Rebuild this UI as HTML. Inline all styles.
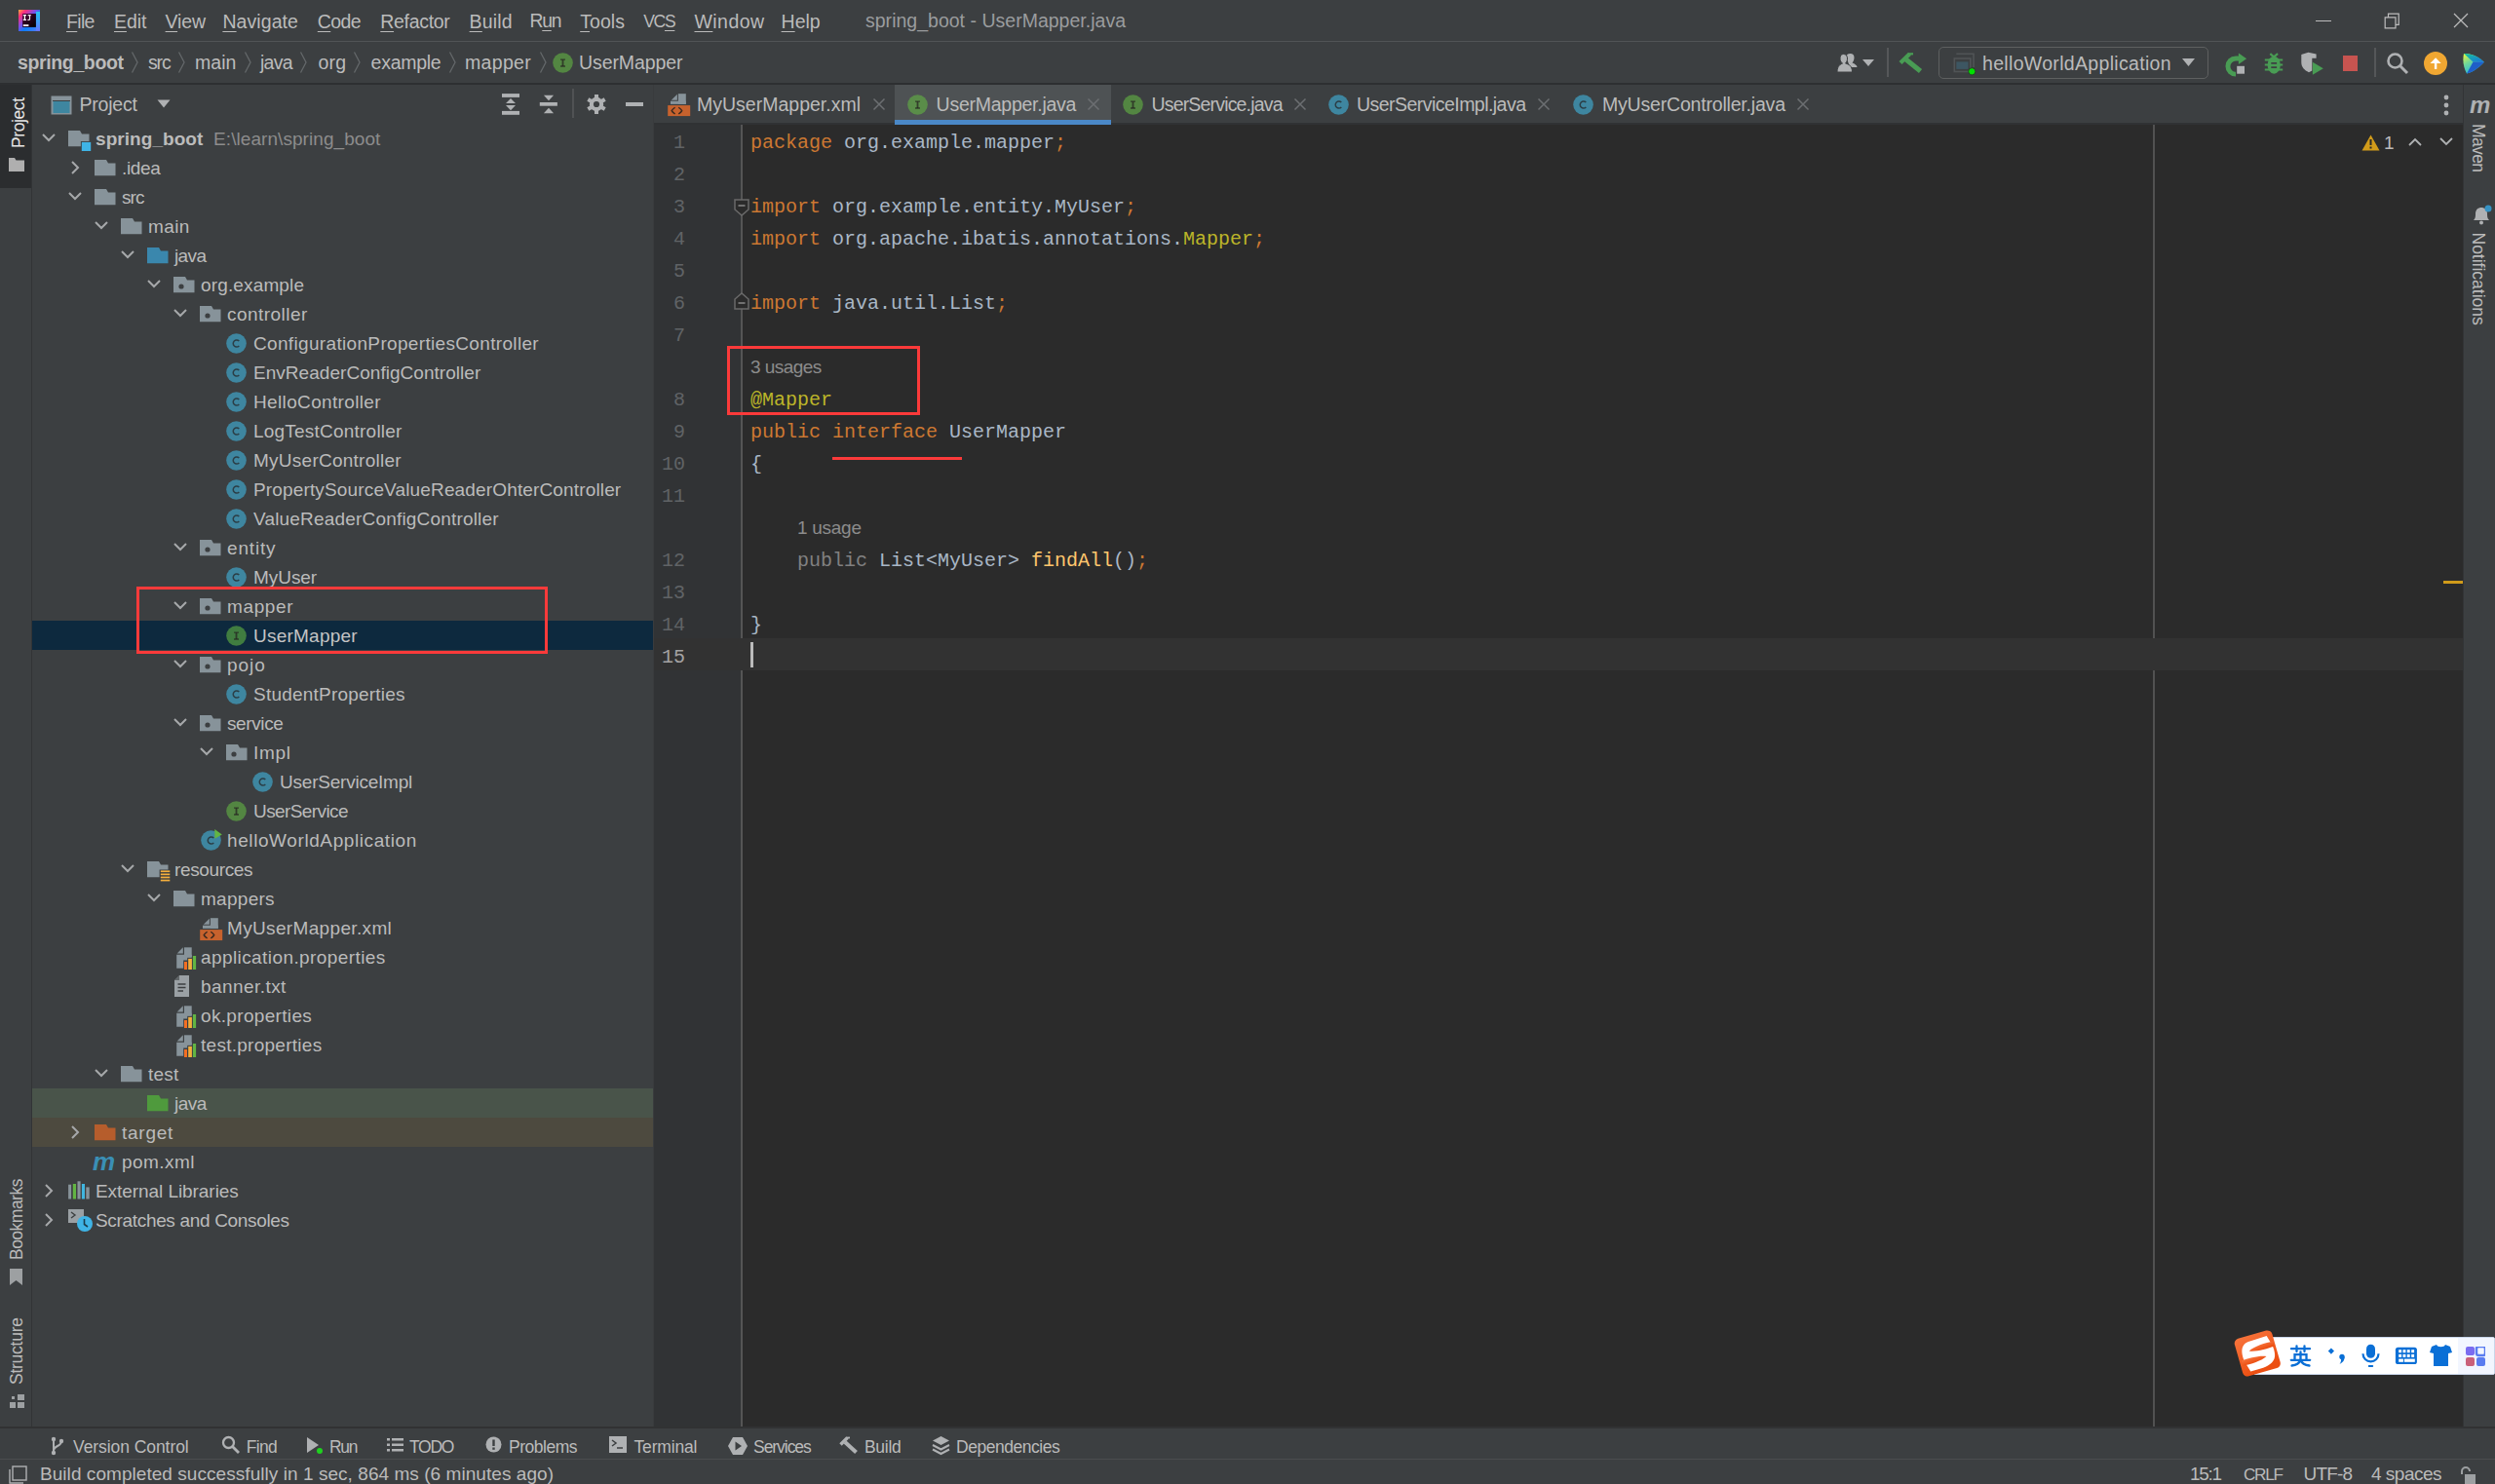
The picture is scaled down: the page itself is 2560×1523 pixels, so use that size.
<!DOCTYPE html><html><head><meta charset="utf-8"><style>html,body{margin:0;padding:0;}body{width:2560px;height:1523px;overflow:hidden;position:relative;background:#3c3f41;font-family:"Liberation Sans",sans-serif;}</style></head><body>
<div style="position:absolute;left:0px;top:0px;width:2560px;height:42px;background:#3c3f41;"></div>
<div style="position:absolute;left:0px;top:42px;width:2560px;height:1px;background:#515456;"></div>
<svg style="position:absolute;left:19px;top:10px;" width="22" height="22" viewBox="0 0 22 22"><defs><linearGradient id="g1" x1="0" y1="0" x2="1" y2="1"><stop offset="0" stop-color="#ffb13c"/><stop offset="0.18" stop-color="#fe2e7a"/><stop offset="0.42" stop-color="#7a4fe8"/><stop offset="0.6" stop-color="#0b7df7"/><stop offset="1" stop-color="#5b7cff"/></linearGradient><linearGradient id="g1b" x1="0" y1="0" x2="0" y2="1"><stop offset="0" stop-color="#24d3f2"/><stop offset="1" stop-color="#6a72ff"/></linearGradient><linearGradient id="g1c" x1="0" y1="0" x2="1" y2="1"><stop offset="0" stop-color="#4a0038"/><stop offset="1" stop-color="#000"/></linearGradient></defs><rect width="22" height="22" fill="url(#g1)"/><rect x="17.9" y="2" width="4.1" height="20" fill="url(#g1b)" opacity="0.85"/><rect x="4.1" y="4" width="13.8" height="13.9" fill="url(#g1c)"/><path d="M4.8 5H8V6.2H7V9.8H8V11H4.8V9.8H5.8V6.2H4.8Z" fill="#fff"/><path d="M9.6 5H12.8V6.2H12.1V9.2C12.1 10.6 11.4 11.1 10.2 11.1C9.8 11.1 9.5 11 9.3 10.9V9.8C9.6 9.9 9.9 10 10.1 10C10.7 10 10.9 9.7 10.9 9.1V6.2H9.6Z" fill="#ece6ea"/><rect x="4.8" y="15.1" width="5.6" height="1.9" fill="#e8e0e6"/></svg>
<div style="position:absolute;left:68px;top:7px;height:30px;line-height:30px;font-size:19.5px;color:#bbbbbb;font-family:'Liberation Sans', sans-serif;white-space:nowrap;letter-spacing:-0.679px;text-underline-offset:3px;"><u>F</u>ile</div>
<div style="position:absolute;left:117px;top:7px;height:30px;line-height:30px;font-size:19.5px;color:#bbbbbb;font-family:'Liberation Sans', sans-serif;white-space:nowrap;letter-spacing:-0.075px;text-underline-offset:3px;"><u>E</u>dit</div>
<div style="position:absolute;left:169.6px;top:7px;height:30px;line-height:30px;font-size:19.5px;color:#bbbbbb;font-family:'Liberation Sans', sans-serif;white-space:nowrap;letter-spacing:-0.174px;text-underline-offset:3px;"><u>V</u>iew</div>
<div style="position:absolute;left:228.4px;top:7px;height:30px;line-height:30px;font-size:19.5px;color:#bbbbbb;font-family:'Liberation Sans', sans-serif;white-space:nowrap;letter-spacing:0.074px;text-underline-offset:3px;"><u>N</u>avigate</div>
<div style="position:absolute;left:325.8px;top:7px;height:30px;line-height:30px;font-size:19.5px;color:#bbbbbb;font-family:'Liberation Sans', sans-serif;white-space:nowrap;letter-spacing:-0.647px;text-underline-offset:3px;"><u>C</u>ode</div>
<div style="position:absolute;left:390.3px;top:7px;height:30px;line-height:30px;font-size:19.5px;color:#bbbbbb;font-family:'Liberation Sans', sans-serif;white-space:nowrap;letter-spacing:-0.317px;text-underline-offset:3px;"><u>R</u>efactor</div>
<div style="position:absolute;left:481.6px;top:7px;height:30px;line-height:30px;font-size:19.5px;color:#bbbbbb;font-family:'Liberation Sans', sans-serif;white-space:nowrap;letter-spacing:0.156px;text-underline-offset:3px;"><u>B</u>uild</div>
<div style="position:absolute;left:543.6px;top:7px;height:30px;line-height:30px;font-size:19.5px;color:#bbbbbb;font-family:'Liberation Sans', sans-serif;white-space:nowrap;letter-spacing:-1.3px;font-size:19.33px;text-underline-offset:3px;">R<u>u</u>n</div>
<div style="position:absolute;left:595.2px;top:7px;height:30px;line-height:30px;font-size:19.5px;color:#bbbbbb;font-family:'Liberation Sans', sans-serif;white-space:nowrap;letter-spacing:0.067px;text-underline-offset:3px;"><u>T</u>ools</div>
<div style="position:absolute;left:660.2px;top:7px;height:30px;line-height:30px;font-size:19.5px;color:#bbbbbb;font-family:'Liberation Sans', sans-serif;white-space:nowrap;letter-spacing:-1.3px;font-size:17.55px;text-underline-offset:3px;">VC<u>S</u></div>
<div style="position:absolute;left:712.5px;top:7px;height:30px;line-height:30px;font-size:19.5px;color:#bbbbbb;font-family:'Liberation Sans', sans-serif;white-space:nowrap;letter-spacing:0.428px;text-underline-offset:3px;"><u>W</u>indow</div>
<div style="position:absolute;left:801.6px;top:7px;height:30px;line-height:30px;font-size:19.5px;color:#bbbbbb;font-family:'Liberation Sans', sans-serif;white-space:nowrap;letter-spacing:-0.042px;text-underline-offset:3px;"><u>H</u>elp</div>
<div style="position:absolute;left:888px;top:6px;height:30px;line-height:30px;font-size:19.5px;color:#9a9c9e;font-family:'Liberation Sans', sans-serif;white-space:nowrap;letter-spacing:0.013px;">spring_boot - UserMapper.java</div>
<div style="position:absolute;left:2376px;top:21px;width:16px;height:1.2px;background:#bdbdbd;"></div>
<svg style="position:absolute;left:2444px;top:11px;" width="20" height="20" viewBox="0 0 20 20"><path d="M3.2 6.8H14V17.8H3.2Z M6.5 6.8V3.2H17.2V14.4H14" fill="none" stroke="#bdbdbd" stroke-width="1.2"/></svg>
<svg style="position:absolute;left:2516px;top:12px;" width="18" height="18" viewBox="0 0 18 18"><path d="M2 2L16 16M16 2L2 16" stroke="#bdbdbd" stroke-width="1.2"/></svg>
<div style="position:absolute;left:0px;top:43px;width:2560px;height:43px;background:#3c3f41;"></div>
<div style="position:absolute;left:0px;top:85px;width:2560px;height:2px;background:#2d2f31;"></div>
<div style="position:absolute;left:18px;top:49px;height:30px;line-height:30px;font-size:19.5px;color:#bbbbbb;font-family:'Liberation Sans', sans-serif;white-space:nowrap;letter-spacing:-0.367px;font-weight:bold;">spring_boot</div>
<div style="position:absolute;left:152px;top:49px;height:30px;line-height:30px;font-size:19.5px;color:#bbbbbb;font-family:'Liberation Sans', sans-serif;white-space:nowrap;letter-spacing:-1.150px;">src</div>
<div style="position:absolute;left:200px;top:49px;height:30px;line-height:30px;font-size:19.5px;color:#bbbbbb;font-family:'Liberation Sans', sans-serif;white-space:nowrap;letter-spacing:0.040px;">main</div>
<div style="position:absolute;left:267px;top:49px;height:30px;line-height:30px;font-size:19.5px;color:#bbbbbb;font-family:'Liberation Sans', sans-serif;white-space:nowrap;letter-spacing:-0.760px;">java</div>
<div style="position:absolute;left:326.5px;top:49px;height:30px;line-height:30px;font-size:19.5px;color:#bbbbbb;font-family:'Liberation Sans', sans-serif;white-space:nowrap;letter-spacing:0.156px;">org</div>
<div style="position:absolute;left:380.6px;top:49px;height:30px;line-height:30px;font-size:19.5px;color:#bbbbbb;font-family:'Liberation Sans', sans-serif;white-space:nowrap;letter-spacing:-0.270px;">example</div>
<div style="position:absolute;left:477px;top:49px;height:30px;line-height:30px;font-size:19.5px;color:#bbbbbb;font-family:'Liberation Sans', sans-serif;white-space:nowrap;letter-spacing:0.315px;">mapper</div>
<svg style="position:absolute;left:134px;top:52px;" width="9" height="24" viewBox="0 0 9 24"><path d="M1.5 1.5L7 12L1.5 22.5" fill="none" stroke="#64686a" stroke-width="1.3"/></svg>
<svg style="position:absolute;left:182px;top:52px;" width="9" height="24" viewBox="0 0 9 24"><path d="M1.5 1.5L7 12L1.5 22.5" fill="none" stroke="#64686a" stroke-width="1.3"/></svg>
<svg style="position:absolute;left:250px;top:52px;" width="9" height="24" viewBox="0 0 9 24"><path d="M1.5 1.5L7 12L1.5 22.5" fill="none" stroke="#64686a" stroke-width="1.3"/></svg>
<svg style="position:absolute;left:307px;top:52px;" width="9" height="24" viewBox="0 0 9 24"><path d="M1.5 1.5L7 12L1.5 22.5" fill="none" stroke="#64686a" stroke-width="1.3"/></svg>
<svg style="position:absolute;left:362px;top:52px;" width="9" height="24" viewBox="0 0 9 24"><path d="M1.5 1.5L7 12L1.5 22.5" fill="none" stroke="#64686a" stroke-width="1.3"/></svg>
<svg style="position:absolute;left:460px;top:52px;" width="9" height="24" viewBox="0 0 9 24"><path d="M1.5 1.5L7 12L1.5 22.5" fill="none" stroke="#64686a" stroke-width="1.3"/></svg>
<svg style="position:absolute;left:553px;top:52px;" width="9" height="24" viewBox="0 0 9 24"><path d="M1.5 1.5L7 12L1.5 22.5" fill="none" stroke="#64686a" stroke-width="1.3"/></svg>
<svg style="position:absolute;left:567px;top:54px;" width="21" height="21" viewBox="0 0 21 21"><circle cx="10.5" cy="10.5" r="10.3" fill="#62b543" fill-opacity="0.6"/><path d="M8 7.2H13M8 14H13" fill="none" stroke="#231f20" stroke-opacity="0.7" stroke-width="1.3"/><path d="M10.5 7.2V14" fill="none" stroke="#231f20" stroke-opacity="0.7" stroke-width="1.8"/></svg>
<div style="position:absolute;left:594px;top:49px;height:30px;line-height:30px;font-size:19.5px;color:#bbbbbb;font-family:'Liberation Sans', sans-serif;white-space:nowrap;letter-spacing:-0.077px;">UserMapper</div>
<svg style="position:absolute;left:1884px;top:54px;" width="24" height="22" viewBox="0 0 24 22"><path d="M10.5 4.5C10.5 2 12 1 14.5 1S18.5 2.5 18.5 5C18.5 7.5 17.5 9.5 16.5 10.5C19 11.5 21.5 13 21.5 15H14Z" fill="#afb1b3"/><path d="M7.5 1.5C10 1.5 11.5 3.2 11.5 6C11.5 8.5 10.5 10.2 9.5 11C13 12 16.5 13.5 16.5 20H1C1 13.5 4.5 12 6.5 11C5 10 4 8.5 4 6C4 3.2 5 1.5 7.5 1.5Z" fill="#afb1b3" stroke="#3c3f41" stroke-width="1"/></svg>
<svg style="position:absolute;left:1910px;top:60px;" width="14" height="9" viewBox="0 0 14 9"><path d="M1 1H13L7 8Z" fill="#afb1b3"/></svg>
<div style="position:absolute;left:1936px;top:49px;width:1.5px;height:30px;background:#555759;"></div>
<svg style="position:absolute;left:1948px;top:52px;" width="26" height="26" viewBox="0 0 26 26"><path d="M7 8.5L22.5 21" stroke="#499c54" stroke-width="5"/><path d="M2 12.5L11.5 3.2" stroke="#499c54" stroke-width="4.2"/><path d="M10 3.3H15" stroke="#499c54" stroke-width="2.2"/></svg>
<div style="position:absolute;left:1989px;top:48px;width:277px;height:33px;border:1.5px solid #5e6060;border-radius:5px;box-sizing:border-box;"></div>
<svg style="position:absolute;left:2002px;top:52px;" width="28" height="26" viewBox="0 0 28 26"><path d="M5.3 3.3H23V17" fill="none" stroke="#505456" stroke-width="1.6"/><rect x="3.3" y="8" width="16.5" height="13.5" fill="#3c3f41" stroke="#505456" stroke-width="1.6"/><rect x="5.3" y="11.4" width="12.2" height="7.5" fill="#3d5662"/><circle cx="21.3" cy="21.3" r="3.6" fill="#00e000" stroke="#2b2b2b" stroke-width="0.8"/></svg>
<div style="position:absolute;left:2034px;top:50px;height:30px;line-height:30px;font-size:19.5px;color:#bbbbbb;font-family:'Liberation Sans', sans-serif;white-space:nowrap;letter-spacing:0.321px;">helloWorldApplication</div>
<svg style="position:absolute;left:2238px;top:59px;" width="15" height="10" viewBox="0 0 15 10"><path d="M1 1H14L7.5 9Z" fill="#afb1b3"/></svg>
<svg style="position:absolute;left:2280px;top:52px;" width="28" height="28" viewBox="0 0 28 28"><path d="M14 5.4H17V10.6H14A5.6 5.6 0 0 0 14 21.8V26.5A10.3 10.3 0 0 1 14 5.4Z" fill="#499c54"/><path d="M16.9 2.6L25.1 8.3L16.9 14.1Z" fill="#499c54"/><rect x="15.2" y="15.8" width="7.8" height="7.9" fill="#afb1b3"/></svg>
<svg style="position:absolute;left:2322px;top:52px;" width="22" height="26" viewBox="0 0 22 26"><ellipse cx="11.2" cy="14.7" rx="6.6" ry="9" fill="#499c54"/><path d="M7.3 3.2L11 6.3L15.1 3.2" fill="none" stroke="#499c54" stroke-width="2.2"/><path d="M1.8 9.5H20.2M1.8 14.4H20.2M1.8 19.4H20.2" stroke="#499c54" stroke-width="2"/><path d="M8.3 12.8H14.1M8.3 17.1H14.1" stroke="#3c3f41" stroke-width="1.8"/><path d="M3.8 8V21M18.6 8V21" stroke="#3c3f41" stroke-width="0"/></svg>
<svg style="position:absolute;left:2360px;top:52px;" width="26" height="28" viewBox="0 0 26 28"><path d="M1.3 4L8.5 1.8L16.6 3.5V7.7H12.3V20.5L9 22.2C4.5 20 1.3 17 1.3 12Z" fill="#afb1b3"/><path d="M12.9 11.8L23.8 18.3L12.9 24.7Z" fill="#499c54"/></svg>
<div style="position:absolute;left:2403.5px;top:57.3px;width:15px;height:15.3px;background:#c75450;"></div>
<div style="position:absolute;left:2436px;top:49px;width:1.5px;height:30px;background:#555759;"></div>
<svg style="position:absolute;left:2448px;top:53px;" width="24" height="24" viewBox="0 0 24 24"><circle cx="9.5" cy="9.5" r="7" fill="none" stroke="#afb1b3" stroke-width="2.6"/><path d="M14.5 14.5L22 22" stroke="#afb1b3" stroke-width="3"/></svg>
<svg style="position:absolute;left:2487px;top:53px;" width="24" height="24" viewBox="0 0 24 24"><circle cx="12" cy="12" r="12" fill="#f0a732"/><path d="M6.5 11.9L12.1 6.3L17.7 11.9Z" fill="#fff"/><rect x="10.9" y="11.5" width="2.4" height="6.4" fill="#fff"/></svg>
<svg style="position:absolute;left:2526px;top:53px;" width="24" height="24" viewBox="0 0 24 24"><defs><linearGradient id="g2" x1="0" y1="0" x2="0.6" y2="1"><stop offset="0" stop-color="#f4f93a"/><stop offset="0.45" stop-color="#6fd69a"/><stop offset="1" stop-color="#18b6f0"/></linearGradient><linearGradient id="g3" x1="0" y1="0" x2="1" y2="1"><stop offset="0" stop-color="#16c79a"/><stop offset="1" stop-color="#1a6fe0"/></linearGradient></defs><path d="M2 2C9 1.5 17 5 22.8 10.8C17 17 10 21.5 5 22.5C1.5 16 0.6 9 2 2Z" fill="url(#g2)"/><path d="M2 2C9 1.5 17 5 22.8 10.8L11.5 10.5Z" fill="url(#g3)"/><path d="M22.8 10.8C17 17 10 21.5 5 22.5L11.5 10.5Z" fill="#1f5fc8"/></svg>
<div style="position:absolute;left:0px;top:87px;width:32px;height:1377px;background:#3c3f41;"></div>
<div style="position:absolute;left:0px;top:87px;width:32px;height:106px;background:#2b2d2f;"></div>
<div style="position:absolute;left:32px;top:87px;width:1px;height:1377px;background:#323436;"></div>
<div style="position:absolute;left:0px;top:0px;height:26px;line-height:26px;font-size:17.5px;color:#e6e6e6;font-family:'Liberation Sans', sans-serif;white-space:nowrap;letter-spacing:-0.411px;transform-origin:0 0;transform:translate(6px,152px) rotate(-90deg);">Project</div>
<svg style="position:absolute;left:9px;top:162px;" width="17" height="15" viewBox="0 0 17 15"><path d="M0 0H6L7.5 2.5H16V14H0Z" fill="#afafaf"/></svg>
<div style="position:absolute;left:0px;top:0px;height:26px;line-height:26px;font-size:17.5px;color:#bbbbbb;font-family:'Liberation Sans', sans-serif;white-space:nowrap;letter-spacing:-0.516px;transform-origin:0 0;transform:translate(4px,1293px) rotate(-90deg);">Bookmarks</div>
<svg style="position:absolute;left:10px;top:1302px;" width="13" height="17" viewBox="0 0 13 17"><path d="M0 0H13V17L6.5 12L0 17Z" fill="#9da0a2"/></svg>
<div style="position:absolute;left:0px;top:0px;height:26px;line-height:26px;font-size:17.5px;color:#bbbbbb;font-family:'Liberation Sans', sans-serif;white-space:nowrap;letter-spacing:-0.250px;transform-origin:0 0;transform:translate(4px,1421px) rotate(-90deg);">Structure</div>
<svg style="position:absolute;left:10px;top:1430px;" width="16" height="15" viewBox="0 0 16 15"><rect x="0" y="9" width="6" height="6" fill="#9da0a2"/><rect x="8" y="9" width="7" height="6" fill="#9da0a2"/><rect x="8" y="1" width="7" height="6" fill="#9da0a2"/><rect x="2" y="3" width="3" height="3" fill="#9da0a2"/></svg>
<div style="position:absolute;left:33px;top:87px;width:638px;height:1377px;background:#3c3f41;"></div>
<svg style="position:absolute;left:52px;top:98px;" width="22" height="20" viewBox="0 0 22 20"><rect x="0.5" y="0.5" width="21" height="19" fill="#87939a"/><rect x="2.5" y="6" width="17" height="12" fill="#3e86a0"/><rect x="2" y="5" width="18" height="1" fill="#3c3f41"/></svg>
<div style="position:absolute;left:81.5px;top:92px;height:30px;line-height:30px;font-size:19.5px;color:#bbbbbb;font-family:'Liberation Sans', sans-serif;white-space:nowrap;letter-spacing:-0.201px;">Project</div>
<svg style="position:absolute;left:161px;top:102px;" width="14" height="9" viewBox="0 0 14 9"><path d="M0.5 0.5H13.5L7 8.5Z" fill="#afb1b3"/></svg>
<svg style="position:absolute;left:514px;top:96px;" width="20" height="22" viewBox="0 0 20 22"><rect x="1" y="0.1" width="18" height="3.8" fill="#afb1b3"/><rect x="1" y="17.9" width="18" height="3.9" fill="#afb1b3"/><path d="M5 10L10 4.9L15 10Z M5 12L10 17.2L15 12Z" fill="#afb1b3"/></svg>
<svg style="position:absolute;left:553px;top:96px;" width="20" height="22" viewBox="0 0 20 22"><rect x="0.8" y="9" width="18.1" height="3.7" fill="#afb1b3"/><path d="M4.9 1.8H15.1L10 7.3Z M4.9 20.2H15.1L10 14.8Z" fill="#afb1b3"/></svg>
<div style="position:absolute;left:587.2px;top:91px;width:1.6px;height:30px;background:#505254;"></div>
<svg style="position:absolute;left:601.7px;top:97px;" width="20" height="20" viewBox="0 0 20 20"><g fill="#afb1b3"><rect x="8" y="0" width="4" height="5" transform="rotate(0 10 10)"/><rect x="8" y="0" width="4" height="5" transform="rotate(60 10 10)"/><rect x="8" y="0" width="4" height="5" transform="rotate(120 10 10)"/><rect x="8" y="0" width="4" height="5" transform="rotate(180 10 10)"/><rect x="8" y="0" width="4" height="5" transform="rotate(240 10 10)"/><rect x="8" y="0" width="4" height="5" transform="rotate(300 10 10)"/><circle cx="10" cy="10" r="7.2"/></g><circle cx="10" cy="10" r="3.1" fill="#3c3f41"/></svg>
<div style="position:absolute;left:642px;top:105px;width:18px;height:3.7px;background:#afb1b3;"></div>
<div style="position:absolute;left:33px;top:637px;width:638px;height:30px;background:#0d293e;"></div>
<div style="position:absolute;left:33px;top:1117px;width:638px;height:30px;background:#49544a;"></div>
<div style="position:absolute;left:33px;top:1147px;width:638px;height:30px;background:#4d4a3f;"></div>
<svg style="position:absolute;left:42px;top:136px;" width="16" height="10" viewBox="0 0 16 10"><path d="M2 2L8 8L14 2" fill="none" stroke="#a6a8aa" stroke-width="2"/></svg>
<svg style="position:absolute;left:70px;top:134px;" width="25" height="21" viewBox="0 0 25 21"><path d="M0 0H12L14 3.5H21.5V10.9H12.9V16.3H0Z" fill="#87939a"/><rect x="13.8" y="11.9" width="9.4" height="9.1" fill="#3fb4e6"/></svg>
<div style="position:absolute;left:98px;top:128px;height:30px;line-height:30px;font-size:19px;color:#bbbbbb;font-family:'Liberation Sans', sans-serif;white-space:nowrap;letter-spacing:0.059px;"><b>spring_boot</b>&nbsp; <span style="color:#8c8c8c">E:\learn\spring_boot</span></div>
<svg style="position:absolute;left:72px;top:164px;" width="10" height="16" viewBox="0 0 10 16"><path d="M2 2L8 8L2 14" fill="none" stroke="#a6a8aa" stroke-width="2"/></svg>
<svg style="position:absolute;left:97px;top:164px;" width="25" height="21" viewBox="0 0 25 21"><path d="M0 0H12L14 3.5H21.5V16.3H0Z" fill="#87939a"/></svg>
<div style="position:absolute;left:125px;top:158px;height:30px;line-height:30px;font-size:19px;color:#bbbbbb;font-family:'Liberation Sans', sans-serif;white-space:nowrap;letter-spacing:-0.326px;">.idea</div>
<svg style="position:absolute;left:69px;top:196px;" width="16" height="10" viewBox="0 0 16 10"><path d="M2 2L8 8L14 2" fill="none" stroke="#a6a8aa" stroke-width="2"/></svg>
<svg style="position:absolute;left:97px;top:194px;" width="25" height="21" viewBox="0 0 25 21"><path d="M0 0H12L14 3.5H21.5V16.3H0Z" fill="#87939a"/></svg>
<div style="position:absolute;left:125px;top:188px;height:30px;line-height:30px;font-size:19px;color:#bbbbbb;font-family:'Liberation Sans', sans-serif;white-space:nowrap;letter-spacing:-0.914px;">src</div>
<svg style="position:absolute;left:96px;top:226px;" width="16" height="10" viewBox="0 0 16 10"><path d="M2 2L8 8L14 2" fill="none" stroke="#a6a8aa" stroke-width="2"/></svg>
<svg style="position:absolute;left:124px;top:224px;" width="25" height="21" viewBox="0 0 25 21"><path d="M0 0H12L14 3.5H21.5V16.3H0Z" fill="#87939a"/></svg>
<div style="position:absolute;left:152px;top:218px;height:30px;line-height:30px;font-size:19px;color:#bbbbbb;font-family:'Liberation Sans', sans-serif;white-space:nowrap;letter-spacing:0.371px;">main</div>
<svg style="position:absolute;left:123px;top:256px;" width="16" height="10" viewBox="0 0 16 10"><path d="M2 2L8 8L14 2" fill="none" stroke="#a6a8aa" stroke-width="2"/></svg>
<svg style="position:absolute;left:151px;top:254px;" width="25" height="21" viewBox="0 0 25 21"><path d="M0 0H12L14 3.5H21.5V16.3H0Z" fill="#3a87ad"/></svg>
<div style="position:absolute;left:179px;top:248px;height:30px;line-height:30px;font-size:19px;color:#bbbbbb;font-family:'Liberation Sans', sans-serif;white-space:nowrap;letter-spacing:-0.620px;">java</div>
<svg style="position:absolute;left:150px;top:286px;" width="16" height="10" viewBox="0 0 16 10"><path d="M2 2L8 8L14 2" fill="none" stroke="#a6a8aa" stroke-width="2"/></svg>
<svg style="position:absolute;left:178px;top:284px;" width="25" height="21" viewBox="0 0 25 21"><path d="M0 0H12L14 3.5H21.5V16.3H0Z" fill="#87939a"/><circle cx="8" cy="10" r="2.6" fill="#3c3f41"/></svg>
<div style="position:absolute;left:206px;top:278px;height:30px;line-height:30px;font-size:19px;color:#bbbbbb;font-family:'Liberation Sans', sans-serif;white-space:nowrap;letter-spacing:0.144px;">org.example</div>
<svg style="position:absolute;left:177px;top:316px;" width="16" height="10" viewBox="0 0 16 10"><path d="M2 2L8 8L14 2" fill="none" stroke="#a6a8aa" stroke-width="2"/></svg>
<svg style="position:absolute;left:205px;top:314px;" width="25" height="21" viewBox="0 0 25 21"><path d="M0 0H12L14 3.5H21.5V16.3H0Z" fill="#87939a"/><circle cx="8" cy="10" r="2.6" fill="#3c3f41"/></svg>
<div style="position:absolute;left:233px;top:308px;height:30px;line-height:30px;font-size:19px;color:#bbbbbb;font-family:'Liberation Sans', sans-serif;white-space:nowrap;letter-spacing:0.460px;">controller</div>
<svg style="position:absolute;left:232px;top:342px;" width="21" height="21" viewBox="0 0 21 21"><circle cx="10.5" cy="10.5" r="10.3" fill="#40b6e0" fill-opacity="0.6"/><path d="M13.3 8.1A3.5 3.5 0 1 0 13.3 12.9" fill="none" stroke="#231f20" stroke-opacity="0.7" stroke-width="1.5"/></svg>
<div style="position:absolute;left:260px;top:338px;height:30px;line-height:30px;font-size:19px;color:#bbbbbb;font-family:'Liberation Sans', sans-serif;white-space:nowrap;letter-spacing:0.335px;">ConfigurationPropertiesController</div>
<svg style="position:absolute;left:232px;top:372px;" width="21" height="21" viewBox="0 0 21 21"><circle cx="10.5" cy="10.5" r="10.3" fill="#40b6e0" fill-opacity="0.6"/><path d="M13.3 8.1A3.5 3.5 0 1 0 13.3 12.9" fill="none" stroke="#231f20" stroke-opacity="0.7" stroke-width="1.5"/></svg>
<div style="position:absolute;left:260px;top:368px;height:30px;line-height:30px;font-size:19px;color:#bbbbbb;font-family:'Liberation Sans', sans-serif;white-space:nowrap;letter-spacing:0.040px;">EnvReaderConfigController</div>
<svg style="position:absolute;left:232px;top:402px;" width="21" height="21" viewBox="0 0 21 21"><circle cx="10.5" cy="10.5" r="10.3" fill="#40b6e0" fill-opacity="0.6"/><path d="M13.3 8.1A3.5 3.5 0 1 0 13.3 12.9" fill="none" stroke="#231f20" stroke-opacity="0.7" stroke-width="1.5"/></svg>
<div style="position:absolute;left:260px;top:398px;height:30px;line-height:30px;font-size:19px;color:#bbbbbb;font-family:'Liberation Sans', sans-serif;white-space:nowrap;letter-spacing:0.352px;">HelloController</div>
<svg style="position:absolute;left:232px;top:432px;" width="21" height="21" viewBox="0 0 21 21"><circle cx="10.5" cy="10.5" r="10.3" fill="#40b6e0" fill-opacity="0.6"/><path d="M13.3 8.1A3.5 3.5 0 1 0 13.3 12.9" fill="none" stroke="#231f20" stroke-opacity="0.7" stroke-width="1.5"/></svg>
<div style="position:absolute;left:260px;top:428px;height:30px;line-height:30px;font-size:19px;color:#bbbbbb;font-family:'Liberation Sans', sans-serif;white-space:nowrap;letter-spacing:0.217px;">LogTestController</div>
<svg style="position:absolute;left:232px;top:462px;" width="21" height="21" viewBox="0 0 21 21"><circle cx="10.5" cy="10.5" r="10.3" fill="#40b6e0" fill-opacity="0.6"/><path d="M13.3 8.1A3.5 3.5 0 1 0 13.3 12.9" fill="none" stroke="#231f20" stroke-opacity="0.7" stroke-width="1.5"/></svg>
<div style="position:absolute;left:260px;top:458px;height:30px;line-height:30px;font-size:19px;color:#bbbbbb;font-family:'Liberation Sans', sans-serif;white-space:nowrap;letter-spacing:0.253px;">MyUserController</div>
<svg style="position:absolute;left:232px;top:492px;" width="21" height="21" viewBox="0 0 21 21"><circle cx="10.5" cy="10.5" r="10.3" fill="#40b6e0" fill-opacity="0.6"/><path d="M13.3 8.1A3.5 3.5 0 1 0 13.3 12.9" fill="none" stroke="#231f20" stroke-opacity="0.7" stroke-width="1.5"/></svg>
<div style="position:absolute;left:260px;top:488px;height:30px;line-height:30px;font-size:19px;color:#bbbbbb;font-family:'Liberation Sans', sans-serif;white-space:nowrap;letter-spacing:0.149px;">PropertySourceValueReaderOhterController</div>
<svg style="position:absolute;left:232px;top:522px;" width="21" height="21" viewBox="0 0 21 21"><circle cx="10.5" cy="10.5" r="10.3" fill="#40b6e0" fill-opacity="0.6"/><path d="M13.3 8.1A3.5 3.5 0 1 0 13.3 12.9" fill="none" stroke="#231f20" stroke-opacity="0.7" stroke-width="1.5"/></svg>
<div style="position:absolute;left:260px;top:518px;height:30px;line-height:30px;font-size:19px;color:#bbbbbb;font-family:'Liberation Sans', sans-serif;white-space:nowrap;letter-spacing:0.185px;">ValueReaderConfigController</div>
<svg style="position:absolute;left:177px;top:556px;" width="16" height="10" viewBox="0 0 16 10"><path d="M2 2L8 8L14 2" fill="none" stroke="#a6a8aa" stroke-width="2"/></svg>
<svg style="position:absolute;left:205px;top:554px;" width="25" height="21" viewBox="0 0 25 21"><path d="M0 0H12L14 3.5H21.5V16.3H0Z" fill="#87939a"/><circle cx="8" cy="10" r="2.6" fill="#3c3f41"/></svg>
<div style="position:absolute;left:233px;top:548px;height:30px;line-height:30px;font-size:19px;color:#bbbbbb;font-family:'Liberation Sans', sans-serif;white-space:nowrap;letter-spacing:0.836px;">entity</div>
<svg style="position:absolute;left:232px;top:582px;" width="21" height="21" viewBox="0 0 21 21"><circle cx="10.5" cy="10.5" r="10.3" fill="#40b6e0" fill-opacity="0.6"/><path d="M13.3 8.1A3.5 3.5 0 1 0 13.3 12.9" fill="none" stroke="#231f20" stroke-opacity="0.7" stroke-width="1.5"/></svg>
<div style="position:absolute;left:260px;top:578px;height:30px;line-height:30px;font-size:19px;color:#bbbbbb;font-family:'Liberation Sans', sans-serif;white-space:nowrap;letter-spacing:-0.051px;">MyUser</div>
<svg style="position:absolute;left:177px;top:616px;" width="16" height="10" viewBox="0 0 16 10"><path d="M2 2L8 8L14 2" fill="none" stroke="#a6a8aa" stroke-width="2"/></svg>
<svg style="position:absolute;left:205px;top:614px;" width="25" height="21" viewBox="0 0 25 21"><path d="M0 0H12L14 3.5H21.5V16.3H0Z" fill="#87939a"/><circle cx="8" cy="10" r="2.6" fill="#3c3f41"/></svg>
<div style="position:absolute;left:233px;top:608px;height:30px;line-height:30px;font-size:19px;color:#bbbbbb;font-family:'Liberation Sans', sans-serif;white-space:nowrap;letter-spacing:0.636px;">mapper</div>
<svg style="position:absolute;left:232px;top:642px;" width="21" height="21" viewBox="0 0 21 21"><circle cx="10.5" cy="10.5" r="10.3" fill="#62b543" fill-opacity="0.6"/><path d="M8 7.2H13M8 14H13" fill="none" stroke="#231f20" stroke-opacity="0.7" stroke-width="1.3"/><path d="M10.5 7.2V14" fill="none" stroke="#231f20" stroke-opacity="0.7" stroke-width="1.8"/></svg>
<div style="position:absolute;left:260px;top:638px;height:30px;line-height:30px;font-size:19px;color:#c4c4c4;font-family:'Liberation Sans', sans-serif;white-space:nowrap;letter-spacing:0.228px;">UserMapper</div>
<svg style="position:absolute;left:177px;top:676px;" width="16" height="10" viewBox="0 0 16 10"><path d="M2 2L8 8L14 2" fill="none" stroke="#a6a8aa" stroke-width="2"/></svg>
<svg style="position:absolute;left:205px;top:674px;" width="25" height="21" viewBox="0 0 25 21"><path d="M0 0H12L14 3.5H21.5V16.3H0Z" fill="#87939a"/><circle cx="8" cy="10" r="2.6" fill="#3c3f41"/></svg>
<div style="position:absolute;left:233px;top:668px;height:30px;line-height:30px;font-size:19px;color:#bbbbbb;font-family:'Liberation Sans', sans-serif;white-space:nowrap;letter-spacing:0.926px;">pojo</div>
<svg style="position:absolute;left:232px;top:702px;" width="21" height="21" viewBox="0 0 21 21"><circle cx="10.5" cy="10.5" r="10.3" fill="#40b6e0" fill-opacity="0.6"/><path d="M13.3 8.1A3.5 3.5 0 1 0 13.3 12.9" fill="none" stroke="#231f20" stroke-opacity="0.7" stroke-width="1.5"/></svg>
<div style="position:absolute;left:260px;top:698px;height:30px;line-height:30px;font-size:19px;color:#bbbbbb;font-family:'Liberation Sans', sans-serif;white-space:nowrap;letter-spacing:0.219px;">StudentProperties</div>
<svg style="position:absolute;left:177px;top:736px;" width="16" height="10" viewBox="0 0 16 10"><path d="M2 2L8 8L14 2" fill="none" stroke="#a6a8aa" stroke-width="2"/></svg>
<svg style="position:absolute;left:205px;top:734px;" width="25" height="21" viewBox="0 0 25 21"><path d="M0 0H12L14 3.5H21.5V16.3H0Z" fill="#87939a"/><circle cx="8" cy="10" r="2.6" fill="#3c3f41"/></svg>
<div style="position:absolute;left:233px;top:728px;height:30px;line-height:30px;font-size:19px;color:#bbbbbb;font-family:'Liberation Sans', sans-serif;white-space:nowrap;letter-spacing:-0.398px;">service</div>
<svg style="position:absolute;left:204px;top:766px;" width="16" height="10" viewBox="0 0 16 10"><path d="M2 2L8 8L14 2" fill="none" stroke="#a6a8aa" stroke-width="2"/></svg>
<svg style="position:absolute;left:232px;top:764px;" width="25" height="21" viewBox="0 0 25 21"><path d="M0 0H12L14 3.5H21.5V16.3H0Z" fill="#87939a"/><circle cx="8" cy="10" r="2.6" fill="#3c3f41"/></svg>
<div style="position:absolute;left:260px;top:758px;height:30px;line-height:30px;font-size:19px;color:#bbbbbb;font-family:'Liberation Sans', sans-serif;white-space:nowrap;letter-spacing:0.665px;">Impl</div>
<svg style="position:absolute;left:259px;top:792px;" width="21" height="21" viewBox="0 0 21 21"><circle cx="10.5" cy="10.5" r="10.3" fill="#40b6e0" fill-opacity="0.6"/><path d="M13.3 8.1A3.5 3.5 0 1 0 13.3 12.9" fill="none" stroke="#231f20" stroke-opacity="0.7" stroke-width="1.5"/></svg>
<div style="position:absolute;left:287px;top:788px;height:30px;line-height:30px;font-size:19px;color:#bbbbbb;font-family:'Liberation Sans', sans-serif;white-space:nowrap;letter-spacing:-0.220px;">UserServiceImpl</div>
<svg style="position:absolute;left:232px;top:822px;" width="21" height="21" viewBox="0 0 21 21"><circle cx="10.5" cy="10.5" r="10.3" fill="#62b543" fill-opacity="0.6"/><path d="M8 7.2H13M8 14H13" fill="none" stroke="#231f20" stroke-opacity="0.7" stroke-width="1.3"/><path d="M10.5 7.2V14" fill="none" stroke="#231f20" stroke-opacity="0.7" stroke-width="1.8"/></svg>
<div style="position:absolute;left:260px;top:818px;height:30px;line-height:30px;font-size:19px;color:#bbbbbb;font-family:'Liberation Sans', sans-serif;white-space:nowrap;letter-spacing:-0.588px;">UserService</div>
<svg style="position:absolute;left:205.5px;top:852.2px;" width="21" height="21" viewBox="0 0 21 21"><circle cx="10.5" cy="10.5" r="10.3" fill="#40b6e0" fill-opacity="0.6"/><path d="M13.3 8.1A3.5 3.5 0 1 0 13.3 12.9" fill="none" stroke="#231f20" stroke-opacity="0.7" stroke-width="1.5"/></svg>
<svg style="position:absolute;left:220px;top:850.8px;" width="10" height="11" viewBox="0 0 10 11"><path d="M0.3 0L7.8 5.5L0.3 9.8Z" fill="#62b543"/></svg>
<div style="position:absolute;left:233px;top:848px;height:30px;line-height:30px;font-size:19px;color:#bbbbbb;font-family:'Liberation Sans', sans-serif;white-space:nowrap;letter-spacing:0.596px;">helloWorldApplication</div>
<svg style="position:absolute;left:123px;top:886px;" width="16" height="10" viewBox="0 0 16 10"><path d="M2 2L8 8L14 2" fill="none" stroke="#a6a8aa" stroke-width="2"/></svg>
<svg style="position:absolute;left:151px;top:884px;" width="25" height="21" viewBox="0 0 25 21"><path d="M0 0H12L14 3.5H21.5V8.6H12.6V16.3H0Z" fill="#87939a"/><rect x="13.8" y="9.4" width="9.5" height="1.7" fill="#f4af3d"/><rect x="13.8" y="12.5" width="9.5" height="1.7" fill="#f4af3d"/><rect x="13.8" y="15.600000000000001" width="9.5" height="1.7" fill="#f4af3d"/><rect x="13.8" y="18.700000000000003" width="9.5" height="1.7" fill="#f4af3d"/></svg>
<div style="position:absolute;left:179px;top:878px;height:30px;line-height:30px;font-size:19px;color:#bbbbbb;font-family:'Liberation Sans', sans-serif;white-space:nowrap;letter-spacing:-0.365px;">resources</div>
<svg style="position:absolute;left:150px;top:916px;" width="16" height="10" viewBox="0 0 16 10"><path d="M2 2L8 8L14 2" fill="none" stroke="#a6a8aa" stroke-width="2"/></svg>
<svg style="position:absolute;left:178px;top:914px;" width="25" height="21" viewBox="0 0 25 21"><path d="M0 0H12L14 3.5H21.5V16.3H0Z" fill="#87939a"/></svg>
<div style="position:absolute;left:206px;top:908px;height:30px;line-height:30px;font-size:19px;color:#bbbbbb;font-family:'Liberation Sans', sans-serif;white-space:nowrap;letter-spacing:0.280px;">mappers</div>
<svg style="position:absolute;left:205px;top:942px;" width="24" height="24" viewBox="0 0 24 24"><path d="M3.8 6.7L9.9 0.8V6.7Z" fill="#87939a"/><rect x="10.9" y="0.2" width="7.9" height="10.7" fill="#87939a"/><rect x="3" y="7.7" width="15.8" height="3.2" fill="#87939a"/><rect x="0.2" y="12.1" width="23" height="11" fill="#c7622d"/><path d="M7.6 14.3C6 15.5 4.6 16.8 4.2 17.6C4.6 18.5 6 19.8 7.6 21M11.3 14.3C12.9 15.5 14.3 16.8 14.7 17.6C14.3 18.5 12.9 19.8 11.3 21" fill="none" stroke="#3a2a20" stroke-width="1.4"/></svg>
<div style="position:absolute;left:233px;top:938px;height:30px;line-height:30px;font-size:19px;color:#bbbbbb;font-family:'Liberation Sans', sans-serif;white-space:nowrap;letter-spacing:0.343px;">MyUserMapper.xml</div>
<svg style="position:absolute;left:178px;top:970px;" width="24" height="26" viewBox="0 0 24 26"><path d="M3.7 8.6L9.8 2.3V8.6Z" fill="#87939a"/><rect x="11" y="2.3" width="7.7" height="10.5" fill="#87939a"/><path d="M3.2 9.8H18.7V12.3H14.2V15.6H10.2V23.8H3.2Z" fill="#87939a"/><rect x="11" y="17" width="3" height="8" fill="#f26e22"/><rect x="15.2" y="13.9" width="3.7" height="11.1" fill="#f4af3d"/><rect x="19.9" y="11" width="3.2" height="14" fill="#62b543"/></svg>
<div style="position:absolute;left:206px;top:968px;height:30px;line-height:30px;font-size:19px;color:#bbbbbb;font-family:'Liberation Sans', sans-serif;white-space:nowrap;letter-spacing:0.413px;">application.properties</div>
<svg style="position:absolute;left:179px;top:1001px;" width="16" height="22" viewBox="0 0 16 22"><path d="M5 0H15V22H0V5Z" fill="#9aa0a4"/><path d="M0 5L5 0V5Z" fill="#3c3f41" opacity="0.6"/><path d="M3.5 9H11.5M3.5 12.5H11.5M3.5 16H9" stroke="#3c3f41" stroke-width="1.3"/></svg>
<div style="position:absolute;left:206px;top:998px;height:30px;line-height:30px;font-size:19px;color:#bbbbbb;font-family:'Liberation Sans', sans-serif;white-space:nowrap;letter-spacing:0.439px;">banner.txt</div>
<svg style="position:absolute;left:178px;top:1030px;" width="24" height="26" viewBox="0 0 24 26"><path d="M3.7 8.6L9.8 2.3V8.6Z" fill="#87939a"/><rect x="11" y="2.3" width="7.7" height="10.5" fill="#87939a"/><path d="M3.2 9.8H18.7V12.3H14.2V15.6H10.2V23.8H3.2Z" fill="#87939a"/><rect x="11" y="17" width="3" height="8" fill="#f26e22"/><rect x="15.2" y="13.9" width="3.7" height="11.1" fill="#f4af3d"/><rect x="19.9" y="11" width="3.2" height="14" fill="#62b543"/></svg>
<div style="position:absolute;left:206px;top:1028px;height:30px;line-height:30px;font-size:19px;color:#bbbbbb;font-family:'Liberation Sans', sans-serif;white-space:nowrap;letter-spacing:0.330px;">ok.properties</div>
<svg style="position:absolute;left:178px;top:1060px;" width="24" height="26" viewBox="0 0 24 26"><path d="M3.7 8.6L9.8 2.3V8.6Z" fill="#87939a"/><rect x="11" y="2.3" width="7.7" height="10.5" fill="#87939a"/><path d="M3.2 9.8H18.7V12.3H14.2V15.6H10.2V23.8H3.2Z" fill="#87939a"/><rect x="11" y="17" width="3" height="8" fill="#f26e22"/><rect x="15.2" y="13.9" width="3.7" height="11.1" fill="#f4af3d"/><rect x="19.9" y="11" width="3.2" height="14" fill="#62b543"/></svg>
<div style="position:absolute;left:206px;top:1058px;height:30px;line-height:30px;font-size:19px;color:#bbbbbb;font-family:'Liberation Sans', sans-serif;white-space:nowrap;letter-spacing:0.271px;">test.properties</div>
<svg style="position:absolute;left:96px;top:1096px;" width="16" height="10" viewBox="0 0 16 10"><path d="M2 2L8 8L14 2" fill="none" stroke="#a6a8aa" stroke-width="2"/></svg>
<svg style="position:absolute;left:124px;top:1094px;" width="25" height="21" viewBox="0 0 25 21"><path d="M0 0H12L14 3.5H21.5V16.3H0Z" fill="#87939a"/></svg>
<div style="position:absolute;left:152px;top:1088px;height:30px;line-height:30px;font-size:19px;color:#bbbbbb;font-family:'Liberation Sans', sans-serif;white-space:nowrap;letter-spacing:0.258px;">test</div>
<svg style="position:absolute;left:151px;top:1124px;" width="25" height="21" viewBox="0 0 25 21"><path d="M0 0H12L14 3.5H21.5V16.3H0Z" fill="#4f9a3d"/></svg>
<div style="position:absolute;left:179px;top:1118px;height:30px;line-height:30px;font-size:19px;color:#bbbbbb;font-family:'Liberation Sans', sans-serif;white-space:nowrap;letter-spacing:-0.553px;">java</div>
<svg style="position:absolute;left:72px;top:1154px;" width="10" height="16" viewBox="0 0 10 16"><path d="M2 2L8 8L2 14" fill="none" stroke="#a6a8aa" stroke-width="2"/></svg>
<svg style="position:absolute;left:97px;top:1154px;" width="25" height="21" viewBox="0 0 25 21"><path d="M0 0H12L14 3.5H21.5V16.3H0Z" fill="#b65d2c"/></svg>
<div style="position:absolute;left:125px;top:1148px;height:30px;line-height:30px;font-size:19px;color:#bbbbbb;font-family:'Liberation Sans', sans-serif;white-space:nowrap;letter-spacing:0.761px;">target</div>
<div style="position:absolute;left:95px;top:1177px;height:30px;line-height:30px;font-size:26px;color:#3a8fb5;font-family:'Liberation Sans', sans-serif;white-space:nowrap;"><i><b>m</b></i></div>
<div style="position:absolute;left:125px;top:1178px;height:30px;line-height:30px;font-size:19px;color:#bbbbbb;font-family:'Liberation Sans', sans-serif;white-space:nowrap;letter-spacing:0.451px;">pom.xml</div>
<svg style="position:absolute;left:45px;top:1214px;" width="10" height="16" viewBox="0 0 10 16"><path d="M2 2L8 8L2 14" fill="none" stroke="#a6a8aa" stroke-width="2"/></svg>
<svg style="position:absolute;left:70px;top:1211px;" width="22" height="22" viewBox="0 0 22 22"><rect x="0.1" y="4.7" width="3" height="14.8" fill="#87939a"/><rect x="4.8" y="4" width="3.2" height="15.5" fill="#62b543"/><rect x="9.5" y="1.3" width="3.1" height="18.2" fill="#87939a"/><rect x="13.9" y="4" width="3.1" height="15.5" fill="#40b6e0"/><rect x="18.3" y="7.4" width="3.4" height="12.1" fill="#87939a"/></svg>
<div style="position:absolute;left:98px;top:1208px;height:30px;line-height:30px;font-size:19px;color:#bbbbbb;font-family:'Liberation Sans', sans-serif;white-space:nowrap;letter-spacing:-0.061px;">External Libraries</div>
<svg style="position:absolute;left:45px;top:1244px;" width="10" height="16" viewBox="0 0 10 16"><path d="M2 2L8 8L2 14" fill="none" stroke="#a6a8aa" stroke-width="2"/></svg>
<svg style="position:absolute;left:70px;top:1239px;" width="26" height="26" viewBox="0 0 26 26"><rect x="0" y="2" width="16" height="14" fill="#9aa0a4"/><path d="M3 5L7 8L3 11" fill="none" stroke="#3c3f41" stroke-width="1.4"/><circle cx="17" cy="17" r="8" fill="#3fb4e6"/><path d="M16.5 12V17.5L20 20" fill="none" stroke="#1b3e4e" stroke-width="1.6"/></svg>
<div style="position:absolute;left:98px;top:1238px;height:30px;line-height:30px;font-size:19px;color:#bbbbbb;font-family:'Liberation Sans', sans-serif;white-space:nowrap;letter-spacing:-0.326px;">Scratches and Consoles</div>
<div style="position:absolute;left:671px;top:87px;width:1857px;height:40px;background:#3c3f41;"></div>
<div style="position:absolute;left:670px;top:87px;width:1px;height:1377px;background:#393b3d;"></div>
<div style="position:absolute;left:671px;top:126px;width:1857px;height:2px;background:#303234;"></div>
<div style="position:absolute;left:918px;top:87px;width:222px;height:39px;background:#4e5254;"></div>
<div style="position:absolute;left:918px;top:123px;width:222px;height:5px;background:#4a88c7;"></div>
<svg style="position:absolute;left:685px;top:96px;" width="24" height="24" viewBox="0 0 24 24"><path d="M3.8 6.7L9.9 0.8V6.7Z" fill="#87939a"/><rect x="10.9" y="0.2" width="7.9" height="10.7" fill="#87939a"/><rect x="3" y="7.7" width="15.8" height="3.2" fill="#87939a"/><rect x="0.2" y="12.1" width="23" height="11" fill="#c7622d"/><path d="M7.6 14.3C6 15.5 4.6 16.8 4.2 17.6C4.6 18.5 6 19.8 7.6 21M11.3 14.3C12.9 15.5 14.3 16.8 14.7 17.6C14.3 18.5 12.9 19.8 11.3 21" fill="none" stroke="#3a2a20" stroke-width="1.4"/></svg>
<div style="position:absolute;left:715px;top:92px;height:30px;line-height:30px;font-size:19.5px;color:#bbbbbb;font-family:'Liberation Sans', sans-serif;white-space:nowrap;letter-spacing:0.003px;">MyUserMapper.xml</div>
<svg style="position:absolute;left:895px;top:100px;" width="14" height="14" viewBox="0 0 14 14"><path d="M1.5 1.5L12.5 12.5M12.5 1.5L1.5 12.5" stroke="#6c6f72" stroke-width="1.5"/></svg>
<svg style="position:absolute;left:931px;top:97px;" width="21" height="21" viewBox="0 0 21 21"><circle cx="10.5" cy="10.5" r="10.3" fill="#62b543" fill-opacity="0.6"/><path d="M8 7.2H13M8 14H13" fill="none" stroke="#231f20" stroke-opacity="0.7" stroke-width="1.3"/><path d="M10.5 7.2V14" fill="none" stroke="#231f20" stroke-opacity="0.7" stroke-width="1.8"/></svg>
<div style="position:absolute;left:960.6px;top:92px;height:30px;line-height:30px;font-size:19.5px;color:#bbbbbb;font-family:'Liberation Sans', sans-serif;white-space:nowrap;letter-spacing:-0.258px;">UserMapper.java</div>
<svg style="position:absolute;left:1115px;top:100px;" width="14" height="14" viewBox="0 0 14 14"><path d="M1.5 1.5L12.5 12.5M12.5 1.5L1.5 12.5" stroke="#6c6f72" stroke-width="1.5"/></svg>
<svg style="position:absolute;left:1152px;top:97px;" width="21" height="21" viewBox="0 0 21 21"><circle cx="10.5" cy="10.5" r="10.3" fill="#62b543" fill-opacity="0.6"/><path d="M8 7.2H13M8 14H13" fill="none" stroke="#231f20" stroke-opacity="0.7" stroke-width="1.3"/><path d="M10.5 7.2V14" fill="none" stroke="#231f20" stroke-opacity="0.7" stroke-width="1.8"/></svg>
<div style="position:absolute;left:1181.5px;top:92px;height:30px;line-height:30px;font-size:19.5px;color:#bbbbbb;font-family:'Liberation Sans', sans-serif;white-space:nowrap;letter-spacing:-0.826px;">UserService.java</div>
<svg style="position:absolute;left:1327px;top:100px;" width="14" height="14" viewBox="0 0 14 14"><path d="M1.5 1.5L12.5 12.5M12.5 1.5L1.5 12.5" stroke="#6c6f72" stroke-width="1.5"/></svg>
<svg style="position:absolute;left:1363px;top:97px;" width="21" height="21" viewBox="0 0 21 21"><circle cx="10.5" cy="10.5" r="10.3" fill="#40b6e0" fill-opacity="0.6"/><path d="M13.3 8.1A3.5 3.5 0 1 0 13.3 12.9" fill="none" stroke="#231f20" stroke-opacity="0.7" stroke-width="1.5"/></svg>
<div style="position:absolute;left:1392px;top:92px;height:30px;line-height:30px;font-size:19.5px;color:#bbbbbb;font-family:'Liberation Sans', sans-serif;white-space:nowrap;letter-spacing:-0.539px;">UserServiceImpl.java</div>
<svg style="position:absolute;left:1577px;top:100px;" width="14" height="14" viewBox="0 0 14 14"><path d="M1.5 1.5L12.5 12.5M12.5 1.5L1.5 12.5" stroke="#6c6f72" stroke-width="1.5"/></svg>
<svg style="position:absolute;left:1614px;top:97px;" width="21" height="21" viewBox="0 0 21 21"><circle cx="10.5" cy="10.5" r="10.3" fill="#40b6e0" fill-opacity="0.6"/><path d="M13.3 8.1A3.5 3.5 0 1 0 13.3 12.9" fill="none" stroke="#231f20" stroke-opacity="0.7" stroke-width="1.5"/></svg>
<div style="position:absolute;left:1644px;top:92px;height:30px;line-height:30px;font-size:19.5px;color:#bbbbbb;font-family:'Liberation Sans', sans-serif;white-space:nowrap;letter-spacing:-0.191px;">MyUserController.java</div>
<svg style="position:absolute;left:1843px;top:100px;" width="14" height="14" viewBox="0 0 14 14"><path d="M1.5 1.5L12.5 12.5M12.5 1.5L1.5 12.5" stroke="#6c6f72" stroke-width="1.5"/></svg>
<svg style="position:absolute;left:2505px;top:97px;" width="10" height="22" viewBox="0 0 10 22"><circle cx="5" cy="3" r="2.4" fill="#afb1b3"/><circle cx="5" cy="11" r="2.4" fill="#afb1b3"/><circle cx="5" cy="19" r="2.4" fill="#afb1b3"/></svg>
<div style="position:absolute;left:671px;top:128px;width:1857px;height:1336px;background:#2b2b2b;"></div>
<div style="position:absolute;left:671px;top:128px;width:89px;height:1336px;background:#313335;"></div>
<div style="position:absolute;left:760px;top:128px;width:2px;height:1336px;background:#555555;"></div>
<div style="position:absolute;left:2209px;top:128px;width:2px;height:1336px;background:#515151;"></div>
<div style="position:absolute;left:671px;top:655px;width:1857px;height:33px;background:#323232;"></div>
<div style="position:absolute;left:770px;top:659px;width:3px;height:26px;background:#bbbbbb;"></div>
<div style="position:absolute;left:2507px;top:596px;width:20px;height:3px;background:#d19b1a;"></div>
<svg style="position:absolute;left:2423px;top:138px;" width="19" height="17" viewBox="0 0 19 17"><path d="M9.5 0.5L18.5 16.5H0.5Z" fill="#d19b1a"/><rect x="8.5" y="5" width="2" height="6" fill="#2b2b2b"/><rect x="8.5" y="12.5" width="2" height="2" fill="#2b2b2b"/></svg>
<div style="position:absolute;left:2446px;top:132px;height:30px;line-height:30px;font-size:19px;color:#bbbbbb;font-family:'Liberation Sans', sans-serif;white-space:nowrap;">1</div>
<svg style="position:absolute;left:2471px;top:141px;" width="14" height="9" viewBox="0 0 14 9"><path d="M1 8L7 2L13 8" fill="none" stroke="#afb1b3" stroke-width="1.8"/></svg>
<svg style="position:absolute;left:2503px;top:141px;" width="14" height="9" viewBox="0 0 14 9"><path d="M1 1L7 7L13 1" fill="none" stroke="#afb1b3" stroke-width="1.8"/></svg>
<div style="position:absolute;left:671px;top:130px;width:32px;text-align:right;height:33px;line-height:33px;font-family:'Liberation Mono', monospace;font-size:20px;color:#606366;">1</div>
<div style="position:absolute;left:770px;top:130px;height:33px;line-height:33px;font-family:'Liberation Mono', monospace;font-size:20px;color:#a9b7c6;white-space:pre;"><span style="color:#cc7832">package</span> org.example.mapper<span style="color:#cc7832">;</span></div>
<div style="position:absolute;left:671px;top:163px;width:32px;text-align:right;height:33px;line-height:33px;font-family:'Liberation Mono', monospace;font-size:20px;color:#606366;">2</div>
<div style="position:absolute;left:671px;top:196px;width:32px;text-align:right;height:33px;line-height:33px;font-family:'Liberation Mono', monospace;font-size:20px;color:#606366;">3</div>
<div style="position:absolute;left:770px;top:196px;height:33px;line-height:33px;font-family:'Liberation Mono', monospace;font-size:20px;color:#a9b7c6;white-space:pre;"><span style="color:#cc7832">import</span> org.example.entity.MyUser<span style="color:#cc7832">;</span></div>
<div style="position:absolute;left:671px;top:229px;width:32px;text-align:right;height:33px;line-height:33px;font-family:'Liberation Mono', monospace;font-size:20px;color:#606366;">4</div>
<div style="position:absolute;left:770px;top:229px;height:33px;line-height:33px;font-family:'Liberation Mono', monospace;font-size:20px;color:#a9b7c6;white-space:pre;"><span style="color:#cc7832">import</span> org.apache.ibatis.annotations.<span style="color:#bbb529">Mapper</span><span style="color:#cc7832">;</span></div>
<div style="position:absolute;left:671px;top:262px;width:32px;text-align:right;height:33px;line-height:33px;font-family:'Liberation Mono', monospace;font-size:20px;color:#606366;">5</div>
<div style="position:absolute;left:671px;top:295px;width:32px;text-align:right;height:33px;line-height:33px;font-family:'Liberation Mono', monospace;font-size:20px;color:#606366;">6</div>
<div style="position:absolute;left:770px;top:295px;height:33px;line-height:33px;font-family:'Liberation Mono', monospace;font-size:20px;color:#a9b7c6;white-space:pre;"><span style="color:#cc7832">import</span> java.util.List<span style="color:#cc7832">;</span></div>
<div style="position:absolute;left:671px;top:328px;width:32px;text-align:right;height:33px;line-height:33px;font-family:'Liberation Mono', monospace;font-size:20px;color:#606366;">7</div>
<div style="position:absolute;left:770px;top:360px;height:33px;line-height:33px;font-size:19px;color:#8c8c8c;font-family:'Liberation Sans', sans-serif;white-space:nowrap;letter-spacing:-0.546px;">3 usages</div>
<div style="position:absolute;left:671px;top:394px;width:32px;text-align:right;height:33px;line-height:33px;font-family:'Liberation Mono', monospace;font-size:20px;color:#606366;">8</div>
<div style="position:absolute;left:770px;top:394px;height:33px;line-height:33px;font-family:'Liberation Mono', monospace;font-size:20px;color:#a9b7c6;white-space:pre;"><span style="color:#bbb529">@Mapper</span></div>
<div style="position:absolute;left:671px;top:427px;width:32px;text-align:right;height:33px;line-height:33px;font-family:'Liberation Mono', monospace;font-size:20px;color:#606366;">9</div>
<div style="position:absolute;left:770px;top:427px;height:33px;line-height:33px;font-family:'Liberation Mono', monospace;font-size:20px;color:#a9b7c6;white-space:pre;"><span style="color:#cc7832">public</span> <span style="color:#cc7832">interface</span> UserMapper</div>
<div style="position:absolute;left:671px;top:460px;width:32px;text-align:right;height:33px;line-height:33px;font-family:'Liberation Mono', monospace;font-size:20px;color:#606366;">10</div>
<div style="position:absolute;left:770px;top:460px;height:33px;line-height:33px;font-family:'Liberation Mono', monospace;font-size:20px;color:#a9b7c6;white-space:pre;">{</div>
<div style="position:absolute;left:671px;top:493px;width:32px;text-align:right;height:33px;line-height:33px;font-family:'Liberation Mono', monospace;font-size:20px;color:#606366;">11</div>
<div style="position:absolute;left:818px;top:525px;height:33px;line-height:33px;font-size:19px;color:#8c8c8c;font-family:'Liberation Sans', sans-serif;white-space:nowrap;letter-spacing:-0.271px;">1 usage</div>
<div style="position:absolute;left:671px;top:559px;width:32px;text-align:right;height:33px;line-height:33px;font-family:'Liberation Mono', monospace;font-size:20px;color:#606366;">12</div>
<div style="position:absolute;left:770px;top:559px;height:33px;line-height:33px;font-family:'Liberation Mono', monospace;font-size:20px;color:#a9b7c6;white-space:pre;">    <span style="color:#808080">public</span> List&lt;MyUser&gt; <span style="color:#ffc66d">findAll</span>()<span style="color:#cc7832">;</span></div>
<div style="position:absolute;left:671px;top:592px;width:32px;text-align:right;height:33px;line-height:33px;font-family:'Liberation Mono', monospace;font-size:20px;color:#606366;">13</div>
<div style="position:absolute;left:671px;top:625px;width:32px;text-align:right;height:33px;line-height:33px;font-family:'Liberation Mono', monospace;font-size:20px;color:#606366;">14</div>
<div style="position:absolute;left:770px;top:625px;height:33px;line-height:33px;font-family:'Liberation Mono', monospace;font-size:20px;color:#a9b7c6;white-space:pre;">}</div>
<div style="position:absolute;left:671px;top:658px;width:32px;text-align:right;height:33px;line-height:33px;font-family:'Liberation Mono', monospace;font-size:20px;color:#a4a3a3;">15</div>
<svg style="position:absolute;left:753px;top:204px;" width="16" height="18" viewBox="0 0 16 18"><path d="M1 1H15V11L8 17L1 11Z" fill="#2b2b2b" stroke="#6a6a6a" stroke-width="1.5"/><path d="M4.5 7H11.5" stroke="#8a8a8a" stroke-width="1.5"/></svg>
<svg style="position:absolute;left:753px;top:300px;" width="16" height="18" viewBox="0 0 16 18"><path d="M1 17H15V7L8 1L1 7Z" fill="#2b2b2b" stroke="#6a6a6a" stroke-width="1.5"/><path d="M4.5 11H11.5" stroke="#8a8a8a" stroke-width="1.5"/></svg>
<div style="position:absolute;left:746px;top:355px;width:198px;height:71px;border:3.3px solid #fb3a3a;box-sizing:border-box;"></div>
<div style="position:absolute;left:854px;top:469px;width:133px;height:3px;background:#fb3a3a;"></div>
<div style="position:absolute;left:140px;top:601.5px;width:422px;height:69px;border:3.3px solid #fb3a3a;box-sizing:border-box;"></div>
<div style="position:absolute;left:2528px;top:87px;width:32px;height:1377px;background:#3c3f41;"></div>
<div style="position:absolute;left:2527px;top:87px;width:1px;height:1377px;background:#323436;"></div>
<div style="position:absolute;left:2534px;top:93px;height:30px;line-height:30px;font-size:24px;color:#afb1b3;font-family:'Liberation Sans', sans-serif;white-space:nowrap;"><i><b>m</b></i></div>
<div style="position:absolute;left:0px;top:0px;height:26px;line-height:26px;font-size:17.5px;color:#bbbbbb;font-family:'Liberation Sans', sans-serif;white-space:nowrap;letter-spacing:-0.633px;transform-origin:0 0;transform:translate(2556px,127px) rotate(90deg);">Maven</div>
<svg style="position:absolute;left:2535px;top:210px;" width="22" height="22" viewBox="0 0 22 22"><path d="M3 16C5 14 5 12 5 9C5 5 8 3 11 3S17 5 17 9C17 12 17 14 19 16Z" fill="#afb1b3"/><circle cx="11" cy="18.5" r="2" fill="#afb1b3"/><circle cx="18" cy="4" r="3.5" fill="#3592c4"/></svg>
<div style="position:absolute;left:0px;top:0px;height:26px;line-height:26px;font-size:17.5px;color:#bbbbbb;font-family:'Liberation Sans', sans-serif;white-space:nowrap;letter-spacing:-0.002px;transform-origin:0 0;transform:translate(2556px,238.5px) rotate(90deg);">Notifications</div>
<div style="position:absolute;left:0px;top:1465px;width:2560px;height:32px;background:#3c3f41;"></div>
<div style="position:absolute;left:0px;top:1464px;width:2560px;height:2px;background:#313233;"></div>
<div style="position:absolute;left:0px;top:1497px;width:2560px;height:1px;background:#4b4d4f;"></div>
<div style="position:absolute;left:75px;top:1470px;height:30px;line-height:30px;font-size:17.5px;color:#bbbbbb;font-family:'Liberation Sans', sans-serif;white-space:nowrap;letter-spacing:-0.068px;">Version Control</div>
<div style="position:absolute;left:252.7px;top:1470px;height:30px;line-height:30px;font-size:17.5px;color:#bbbbbb;font-family:'Liberation Sans', sans-serif;white-space:nowrap;letter-spacing:-0.649px;">Find</div>
<div style="position:absolute;left:338px;top:1470px;height:30px;line-height:30px;font-size:17.5px;color:#bbbbbb;font-family:'Liberation Sans', sans-serif;white-space:nowrap;letter-spacing:-1.3px;font-size:17.44px;">Run</div>
<div style="position:absolute;left:420px;top:1470px;height:30px;line-height:30px;font-size:17.5px;color:#bbbbbb;font-family:'Liberation Sans', sans-serif;white-space:nowrap;letter-spacing:-1.283px;">TODO</div>
<div style="position:absolute;left:522px;top:1470px;height:30px;line-height:30px;font-size:17.5px;color:#bbbbbb;font-family:'Liberation Sans', sans-serif;white-space:nowrap;letter-spacing:-0.475px;">Problems</div>
<div style="position:absolute;left:650.5px;top:1470px;height:30px;line-height:30px;font-size:17.5px;color:#bbbbbb;font-family:'Liberation Sans', sans-serif;white-space:nowrap;letter-spacing:-0.177px;">Terminal</div>
<div style="position:absolute;left:773px;top:1470px;height:30px;line-height:30px;font-size:17.5px;color:#bbbbbb;font-family:'Liberation Sans', sans-serif;white-space:nowrap;letter-spacing:-1.044px;">Services</div>
<div style="position:absolute;left:887px;top:1470px;height:30px;line-height:30px;font-size:17.5px;color:#bbbbbb;font-family:'Liberation Sans', sans-serif;white-space:nowrap;letter-spacing:-0.305px;">Build</div>
<div style="position:absolute;left:981px;top:1470px;height:30px;line-height:30px;font-size:17.5px;color:#bbbbbb;font-family:'Liberation Sans', sans-serif;white-space:nowrap;letter-spacing:-0.472px;">Dependencies</div>
<svg style="position:absolute;left:52px;top:1474px;" width="14" height="20" viewBox="0 0 14 20"><circle cx="3" cy="3" r="2.2" fill="#afb1b3"/><circle cx="3" cy="17" r="2.2" fill="#afb1b3"/><circle cx="11" cy="5" r="2.2" fill="#afb1b3"/><path d="M3 3V17M11 5C11 11 3 9 3 15" fill="none" stroke="#afb1b3" stroke-width="2"/></svg>
<svg style="position:absolute;left:227px;top:1473px;" width="19" height="19" viewBox="0 0 19 19"><circle cx="7.5" cy="7.5" r="5.5" fill="none" stroke="#afb1b3" stroke-width="2.3"/><path d="M11.5 11.5L18 18" stroke="#afb1b3" stroke-width="2.8"/></svg>
<svg style="position:absolute;left:314px;top:1474px;" width="18" height="19" viewBox="0 0 18 19"><path d="M1 1L13 9L1 17Z" fill="#afb1b3"/><circle cx="14" cy="15" r="3" fill="#1fd11f"/></svg>
<svg style="position:absolute;left:397px;top:1475px;" width="17" height="16" viewBox="0 0 17 16"><rect x="0" y="1" width="3" height="2.5" fill="#afb1b3"/><rect x="5" y="1" width="12" height="2.5" fill="#afb1b3"/><rect x="0" y="6.5" width="3" height="2.5" fill="#afb1b3"/><rect x="5" y="6.5" width="12" height="2.5" fill="#afb1b3"/><rect x="0" y="12" width="3" height="2.5" fill="#afb1b3"/><rect x="5" y="12" width="12" height="2.5" fill="#afb1b3"/></svg>
<svg style="position:absolute;left:498px;top:1474px;" width="17" height="17" viewBox="0 0 17 17"><circle cx="8.5" cy="8.5" r="8" fill="#afb1b3"/><rect x="7.3" y="3.5" width="2.4" height="6.5" fill="#3c3f41"/><rect x="7.3" y="11.5" width="2.4" height="2.3" fill="#3c3f41"/></svg>
<svg style="position:absolute;left:625px;top:1474px;" width="18" height="17" viewBox="0 0 18 17"><rect x="0" y="0" width="18" height="17" fill="#afb1b3"/><path d="M3 4L7 7L3 10" fill="none" stroke="#3c3f41" stroke-width="1.5"/><path d="M8 12H14" stroke="#3c3f41" stroke-width="1.5"/></svg>
<svg style="position:absolute;left:747px;top:1474px;" width="20" height="20" viewBox="0 0 20 20"><path d="M5 1H15L20 10L15 19H5L0 10Z" fill="#afb1b3"/><path d="M7.5 5.5L14 10L7.5 14.5Z" fill="#3c3f41"/></svg>
<svg style="position:absolute;left:861px;top:1473px;" width="20" height="20" viewBox="0 0 20 20"><path d="M6 7L17.5 17.5" stroke="#afb1b3" stroke-width="4"/><path d="M1.5 9.5L8.5 2.5" stroke="#afb1b3" stroke-width="3.4"/><path d="M7.5 2.5H11" stroke="#afb1b3" stroke-width="1.8"/></svg>
<svg style="position:absolute;left:956px;top:1473px;" width="19" height="21" viewBox="0 0 19 21"><path d="M9.5 1L18 5.5L9.5 10L1 5.5Z" fill="#afb1b3"/><path d="M1 10L9.5 14.5L18 10M1 14.5L9.5 19L18 14.5" fill="none" stroke="#afb1b3" stroke-width="2"/></svg>
<div style="position:absolute;left:0px;top:1498px;width:2560px;height:25px;background:#3c3f41;"></div>
<svg style="position:absolute;left:9px;top:1504px;" width="19" height="19" viewBox="0 0 19 19"><rect x="4" y="1" width="14" height="14" fill="none" stroke="#afb1b3" stroke-width="1.4"/><path d="M1 4V18H15" fill="none" stroke="#afb1b3" stroke-width="1.4"/></svg>
<div style="position:absolute;left:41px;top:1498px;height:30px;line-height:30px;font-size:19px;color:#bbbbbb;font-family:'Liberation Sans', sans-serif;white-space:nowrap;letter-spacing:0.053px;">Build completed successfully in 1 sec, 864 ms (6 minutes ago)</div>
<div style="position:absolute;left:2247px;top:1498px;height:30px;line-height:30px;font-size:19px;color:#bbbbbb;font-family:'Liberation Sans', sans-serif;white-space:nowrap;letter-spacing:-1.3px;font-size:18.96px;">15:1</div>
<div style="position:absolute;left:2302px;top:1498px;height:30px;line-height:30px;font-size:19px;color:#bbbbbb;font-family:'Liberation Sans', sans-serif;white-space:nowrap;letter-spacing:-1.3px;font-size:17.19px;">CRLF</div>
<div style="position:absolute;left:2363.6px;top:1498px;height:30px;line-height:30px;font-size:19px;color:#bbbbbb;font-family:'Liberation Sans', sans-serif;white-space:nowrap;letter-spacing:-0.857px;">UTF-8</div>
<div style="position:absolute;left:2433px;top:1498px;height:30px;line-height:30px;font-size:19px;color:#bbbbbb;font-family:'Liberation Sans', sans-serif;white-space:nowrap;letter-spacing:-0.507px;">4 spaces</div>
<svg style="position:absolute;left:2523px;top:1505px;" width="18" height="18" viewBox="0 0 18 18"><path d="M3 8V5A4 4 0 0 1 11 5" fill="none" stroke="#9da0a2" stroke-width="2"/><rect x="6" y="8" width="11" height="10" fill="#9da0a2"/></svg>
<div style="position:absolute;left:2312px;top:1372px;width:248px;height:39px;background:#ffffff;border:1px solid #c9d6ea;box-sizing:border-box;border-radius:2px;"></div>
<svg style="position:absolute;left:2291px;top:1363px;" width="50" height="50" viewBox="0 0 50 50"><defs><linearGradient id="gs" x1="0" y1="0" x2="0.3" y2="1"><stop offset="0" stop-color="#f7743c"/><stop offset="1" stop-color="#ec4f12"/></linearGradient></defs><g transform="rotate(-16 25 25)"><rect x="5" y="6" width="40" height="40" rx="5" fill="url(#gs)"/><path d="M21 11.8L39 11.3L41.2 19.5C42.6 24 42.8 30 41.2 34C38.8 40 31 41.8 24 41.8L13.2 41.8L10.8 33.5C9.2 28.5 9.2 22 10.8 18C12.8 13.5 16 11.8 21 11.8Z" fill="#fff"/><path d="M44 18.8C36 17.6 23 18.2 17.5 21.2C23 24 36 24.4 44 23.4Z" fill="url(#gs)"/><path d="M7 28.8C15 28 27.5 28.6 33 31.5C27.5 34.4 15 35 7 34.2Z" fill="url(#gs)"/></g></svg>
<svg style="position:absolute;left:2349px;top:1380px;" width="23" height="23" viewBox="0 0 23 23"><g fill="none" stroke="#0a6fd6" stroke-width="2.3" stroke-linecap="round"><path d="M2 4.2H21M7.5 1.5V7M15.5 1.5V7"/><path d="M5.5 15.5V10.2H17.5V15.5"/><path d="M11.5 7.5V15.5M1.8 15.8H21.2"/><path d="M11.3 16C10 19.5 7 21 2.5 21.5M11.7 16C13 19.5 16 21 20.5 21.5"/></g></svg>
<svg style="position:absolute;left:2386px;top:1380px;" width="22" height="24" viewBox="0 0 22 24"><path d="M5.9 3.6L9 6.6L5.9 9.7L2.8 6.6Z" fill="#0a6fd6"/><circle cx="17" cy="12.4" r="2.7" fill="#0a6fd6"/><path d="M19.6 12.6C19.8 15.8 18 18.6 14.5 20C15.8 18.3 16.3 16.5 16 14.8Z" fill="#0a6fd6"/></svg>
<svg style="position:absolute;left:2423px;top:1379px;" width="22" height="26" viewBox="0 0 22 26"><rect x="5" y="0.8" width="9" height="14" rx="4.5" fill="#0a6fd6"/><path d="M1.5 10.3A8 8 0 0 0 17.5 10.3" fill="none" stroke="#0a6fd6" stroke-width="2.2"/><rect x="6.8" y="22" width="5.4" height="1.9" rx="0.9" fill="#0a6fd6"/></svg>
<svg style="position:absolute;left:2457px;top:1382px;" width="24" height="19" viewBox="0 0 24 19"><rect x="0.9" y="0.7" width="22" height="17.3" rx="2.6" fill="#0a6fd6"/><rect x="4.2" y="3.2" width="2.9" height="3" fill="#fff"/><rect x="8.5" y="3.2" width="2.9" height="3" fill="#fff"/><rect x="12.8" y="3.2" width="2.9" height="3" fill="#fff"/><rect x="17.2" y="3.2" width="2.9" height="3" fill="#fff"/><rect x="4.2" y="7.9" width="2.9" height="3" fill="#fff"/><rect x="8.5" y="7.9" width="2.9" height="3" fill="#fff"/><rect x="12.8" y="7.9" width="2.9" height="3" fill="#fff"/><rect x="17.2" y="7.9" width="2.9" height="3" fill="#fff"/><rect x="4.2" y="12.6" width="4.7" height="3.2" fill="#fff"/><rect x="9.9" y="12.6" width="10.9" height="3.2" fill="#fff"/></svg>
<svg style="position:absolute;left:2493px;top:1380px;" width="23" height="22" viewBox="0 0 23 22"><path d="M7 0L2 2L0 8L4 9V22H19V9L23 8L21 2L16 0C15 3 8 3 7 0Z" fill="#0a6fd6"/></svg>
<div style="position:absolute;left:2522px;top:1373px;width:37px;height:37px;background:#f2f6ff;"></div>
<svg style="position:absolute;left:2530px;top:1382px;" width="20" height="20" viewBox="0 0 20 20"><rect x="0" y="0" width="9" height="9" rx="2" fill="#7a6cf0"/><rect x="11" y="0" width="9" height="9" rx="2" fill="none" stroke="#5a7cf0" stroke-width="2.5"/><rect x="0" y="11" width="9" height="9" rx="2" fill="#c9607a"/><rect x="11" y="11" width="9" height="9" rx="2" fill="#5a7cf0"/></svg>
</body></html>
